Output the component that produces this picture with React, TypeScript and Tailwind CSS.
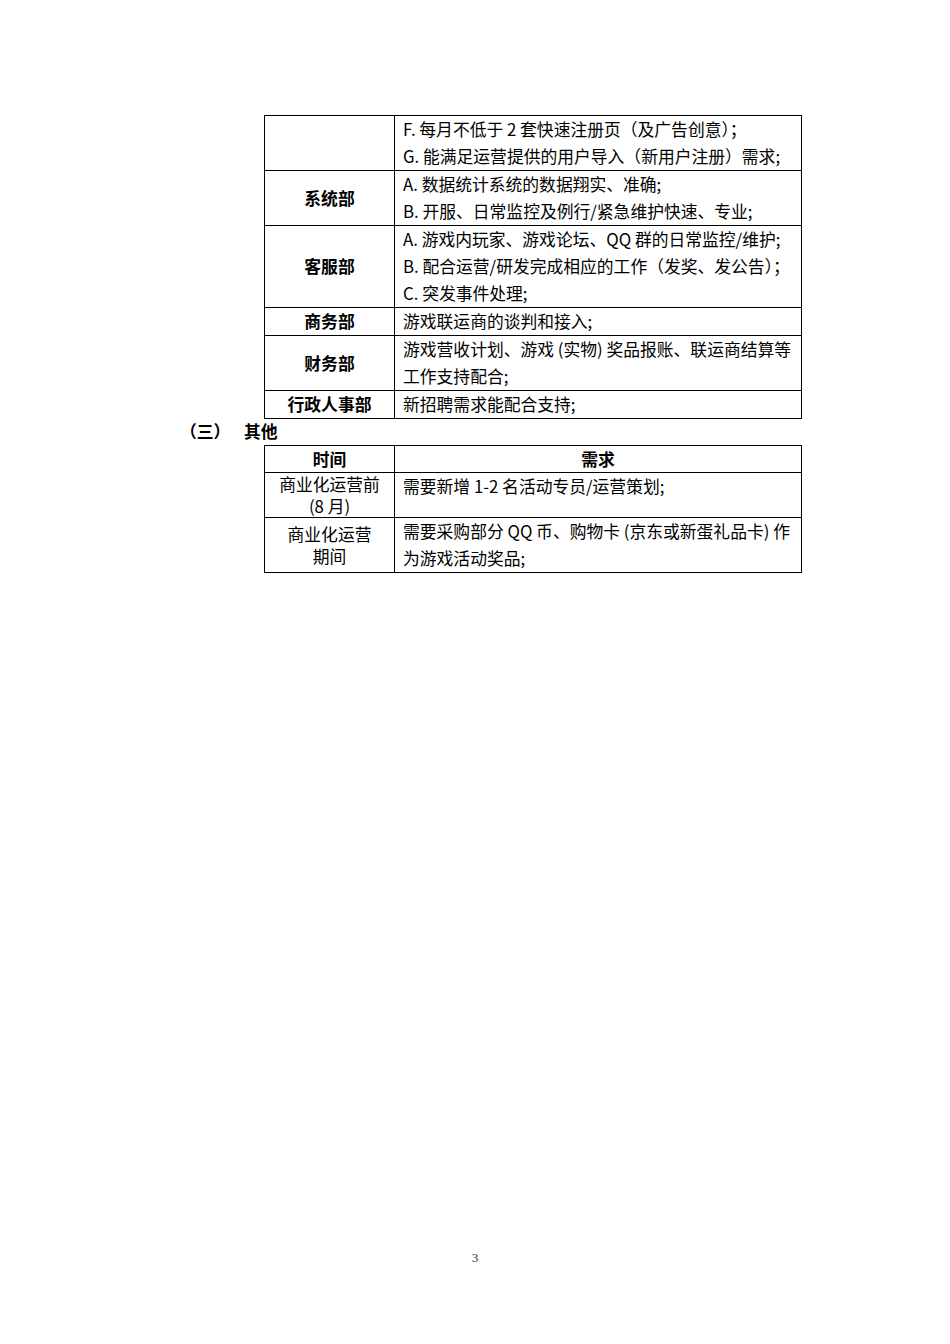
const font = { fontFamily: '"Noto Sans CJK SC", "Noto Sans", sans-serif' }

type Row = { dept: string; lines: string[] }

const deptRows: Row[] = [
  {
    dept: "",
    lines: ["F. 每月不低于 2 套快速注册页（及广告创意）；", "G. 能满足运营提供的用户导入（新用户注册）需求;"],
  },
  { dept: "系统部", lines: ["A. 数据统计系统的数据翔实、准确;", "B. 开服、日常监控及例行/紧急维护快速、专业;"] },
  {
    dept: "客服部",
    lines: [
      "A. 游戏内玩家、游戏论坛、QQ 群的日常监控/维护;",
      "B. 配合运营/研发完成相应的工作（发奖、发公告）；",
      "C. 突发事件处理;",
    ],
  },
  { dept: "商务部", lines: ["游戏联运商的谈判和接入;"] },
  { dept: "财务部", lines: ["游戏营收计划、游戏 (实物) 奖品报账、联运商结算等", "工作支持配合;"] },
  { dept: "行政人事部", lines: ["新招聘需求能配合支持;"] },
]

export default function App() {
  return (
    <div className="relative h-[1344px] w-[950px] bg-white text-[16.8px] text-black" style={font}>
      <div className="pl-[264px] pt-[115px]">
        <table className="w-[538px] border-collapse">
          <tbody>
            {deptRows.map((row, i) => (
              <tr key={i}>
                <td className="w-[130px] border border-black p-0 text-center align-middle font-bold leading-[27px]">
                  {row.dept}
                </td>
                <td className="border border-black px-[8px] py-0 align-top leading-[27px] whitespace-nowrap">
                  {row.lines.map((l) => (
                    <div key={l}>{l}</div>
                  ))}
                </td>
              </tr>
            ))}
          </tbody>
        </table>
      </div>

      <div className="flex h-[26px] items-center pl-[180px] font-bold">
        <span className="w-[64px]">（三）</span>
        <span>其他</span>
      </div>

      <div className="pl-[264px]">
        <table className="w-[538px] border-collapse">
          <tbody>
            <tr>
              <td className="w-[130px] border border-black p-0 text-center font-bold leading-[26px]">时间</td>
              <td className="border border-black p-0 text-center font-bold leading-[26px]">需求</td>
            </tr>
            <tr>
              <td className="border border-black p-0 text-center align-middle leading-[22px]">
                <div>商业化运营前</div>
                <div>(8 月)</div>
              </td>
              <td className="border border-black px-[8px] py-0 align-top leading-[27px]">
                需要新增 1-2 名活动专员/运营策划;
              </td>
            </tr>
            <tr>
              <td className="border border-black p-0 text-center align-middle leading-[22px]">
                <div>商业化运营</div>
                <div>期间</div>
              </td>
              <td className="border border-black px-[8px] py-0 align-top leading-[27px] whitespace-nowrap">
                <div>需要采购部分 QQ 币、购物卡 (京东或新蛋礼品卡) 作</div>
                <div>为游戏活动奖品;</div>
              </td>
            </tr>
          </tbody>
        </table>
      </div>

      <div
        className="absolute left-0 right-0 top-[1248px] text-center text-[13px] text-[#333]"
        style={{ fontFamily: '"Liberation Serif", serif' }}
      >
        3
      </div>
    </div>
  )
}
